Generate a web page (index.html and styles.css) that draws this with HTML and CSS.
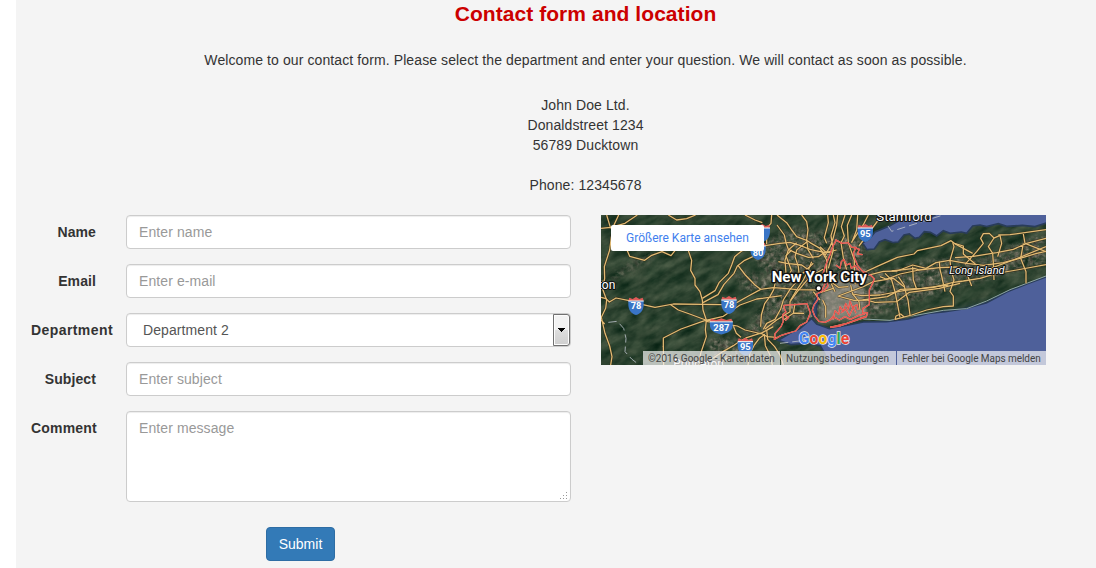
FILE: index.html
```
<!DOCTYPE html>
<html lang="en">
<head>
<meta charset="utf-8">
<title>Contact form and location</title>
<link rel="stylesheet" href="styles.css">
</head>
<body>
<main class="page">
  <header class="intro">
    <h1>Contact form and location</h1>
    <p>Welcome to our contact form. Please select the department and enter your question. We will contact as soon as possible.</p>
    <address>John Doe Ltd.<br>Donaldstreet 1234<br>56789 Ducktown</address>
    <p class="phone">Phone: 12345678</p>
  </header>
  <div class="columns">
    <form class="form">
      <div class="row"><label for="name">Name</label><input class="control" id="name" placeholder="Enter name"></div>
      <div class="row"><label for="email">Email</label><input class="control" id="email" placeholder="Enter e-mail"></div>
      <div class="row"><label for="department">Department</label>
        <div class="control select" id="department"><span>Department 2</span>
          <i class="drop"><svg width="7" height="4" shape-rendering="crispEdges"><path d="M0 0h7v1H0zM1 1h5v1H1zM2 2h3v1H2zM3 3h1v1H3z"/></svg></i>
        </div>
      </div>
      <div class="row"><label for="subject">Subject</label><input class="control" id="subject" placeholder="Enter subject"></div>
      <div class="row"><label for="comment">Comment</label>
        <div class="message"><textarea class="control" id="comment" placeholder="Enter message"></textarea>
          <svg class="grip" width="8" height="8" fill="#999" shape-rendering="crispEdges"><path d="M6 0h1v1H6zM3 3h1v1H3zM6 3h1v1H6zM0 6h1v1H0zM3 6h1v1H3zM6 6h1v1H6z"/></svg>
        </div>
      </div>
      <button class="submit" type="button">Submit</button>
    </form>
    <section class="map">
      <svg class="terrain" viewBox="3 15 1335 450" width="445" height="150">
        <defs>
          <filter id="relief" x="0" y="0" width="100%" height="100%" color-interpolation-filters="sRGB">
            <feTurbulence type="fractalNoise" baseFrequency=".018 .04" numOctaves="5" seed="8"/>
            <feColorMatrix values=".3 .12 0 0 -.03  .24 .12 0 0 .085  .22 .1 0 0 .03  0 0 0 0 1"/>
          </filter>
          <filter id="city" x="-10%" y="-10%" width="120%" height="120%" color-interpolation-filters="sRGB">
            <feTurbulence type="fractalNoise" baseFrequency=".07" numOctaves="3" seed="3" result="n"/>
            <feColorMatrix in="n" values=".6 0 0 0 .1  .55 0 0 0 .12  .5 0 0 0 .09  0 2.6 0 0 -.8" result="c"/>
            <feGaussianBlur in="SourceAlpha" stdDeviation="9" result="b"/>
            <feComposite in="c" in2="b" operator="in"/>
          </filter>
          <filter id="soft"><feGaussianBlur stdDeviation="7"/></filter>
          <g id="roads">
            <path d="M3 262L18 266 28 276 48 264 84 271 125 283 165 292 220 282 310 283 365 284 410 278 440 261 482 238 520 233 552 235 592 239 660 240"/>
            <path d="M56 15L42 45 34 82 29 120 13 170 14 205 8 238 20 270 17 295 4 322 15 370 29 408 36 440 32 465M3 55L32 52 75 40 112 15M20 15L32 55M3 213L21 216M3 330L14 342"/>
            <path d="M82 122L89 139 134 151 155 136 186 125 213 137 225 122M265 122L275 151 272 181 285 205 285 225 300 245 307 270 309 300 319 330 316 359 319 380 302 430 296 465"/>
            <path d="M307 265L345 242 357 218 385 190 395 165 404 140 425 123 462 112 500 106 540 100 570 97 600 106 630 118 675 128 710 120M309 278L354 254 372 223 402 190 412 168 434 151 480 130"/>
            <path d="M414 166L436 195 465 225 482 238M210 283L235 300 269 312 317 330 345 333M190 410L190 384 243 357 314 332 370 319 420 285 470 267 545 257M205 15L230 30 260 26 287 15M435 15L465 30 487 38M488 47L500 70 500 102M515 15L513 40 497 58"/>
            <path d="M190 408L191 465M317 334L400 346 412 348 435 360 487 372 502 380 530 382M400 348L409 370 423 382M314 461L370 424 400 407 416 396 440 383 487 368 520 350"/>
            <path d="M394 435L380 445 368 455M490 358L500 340 525 328 542 297 550 270 570 238 590 215 610 188 640 160M482 350L484 315 494 281 510 259 521 239 530 200"/>
            <path d="M494 358L530 330 570 305 570 275 592 245 630 200 670 177M500 360L503 388 524 410 540 435 550 465M493 372L496 407 510 435 517 465M493 374L478 385 463 405 450 430 444 465"/>
            <path d="M531 15L560 38 575 60 590 80 620 91 640 104M605 15L620 35 624 60 620 90 624 119 640 145M590 98L565 120 555 151 558 190 580 210M620 96L590 120 585 140 595 170 600 220M630 98L660 115 680 150 680 190 705 245"/>
            <path d="M531 45L553 75 558 98 565 118 590 130 625 142 655 140 677 125M535 155L560 160 605 165 640 190 670 205M575 120L558 137 574 181 565 205M635 155L625 180 610 210 590 240 572 270M580 309L612 310M550 330L580 310 585 280M565 200L590 190 610 190"/>
            <path d="M673 140L690 110 698 90 710 45 713 15M683 15L685 38 673 83 680 100M700 15L705 38 693 77 700 120 685 175M735 15L724 50 733 78 723 98 730 143 740 180M755 15L742 46 745 98 763 151 763 180 768 224M773 15L770 60 755 98M777 108L835 30 855 15M754 98L790 44 805 15M660 110L676 125 694 128M663 120L681 142"/>
            <path d="M782 192L830 170 892 142 942 132 952 122 1023 107 1053 92 1063 100 1075 107 1118 130M800 197L850 184 891 183 938 165 978 175 1008 158 1048 151 1100 160 1150 166 1210 158 1270 142 1310 130 1338 124"/>
            <path d="M820 215L860 208 900 192 957 180 1018 173 1070 171 1130 181 1180 172 1240 150 1338 110M758 252L785 257 840 255 915 241 1000 232 1060 217 1090 213 1140 205 1190 190 1250 180 1338 164M713 258L762 271 800 270 825 277 890 275 928 247 1018 235 1080 220"/>
            <path d="M788 270L862 260 902 238 965 235 1045 225M1058 97L1062 110 1050 151 1053 180 1062 210 1050 244 1060 258 1060 288 1030 290 980 300 935 315 885 328 888 318 902 312 912 320"/>
            <path d="M855 190L875 210 885 245 892 280 900 322M895 200L912 225 920 258 924 270 930 315M938 170L940 210 950 238M1018 155L1020 178 1025 198 1035 245M1063 100L1090 108 1090 132 1126 162"/>
            <path d="M1095 163L1130 125 1150 100 1142 85 1150 71 1168 70 1182 84 1165 110 1178 130 1180 158 1182 210M1180 85L1200 76 1205 100 1193 140M1195 75L1230 74 1338 59M1065 143L1120 139 1190 128 1240 118 1280 100 1338 85M1270 100L1262 145 1278 185 1278 220M1270 72L1275 100 1338 125M1100 190L1115 228M840 200L858 207 880 205 912 230M875 183L943 175 958 180M820 215L790 230 715 258M752 225L758 252 777 275 780 300"/>
            <path d="M668 270L677 290 677 323M686 210L715 232 745 230M700 235L660 248M720 190L750 205 765 220M660 270L640 245"/>
          </g>
          <g id="shield">
            <path d="M-23 -15H23V-6C23 12 15 23 0 27C-15 23 -23 12 -23 -6Z" fill="#3975c6"/>
            <path d="M-23 -16L-20 -25-10 -21 0 -27 10 -21 20 -25 23 -16Z" fill="#df5b58"/><path d="M-23 -15H23" stroke="#fff" stroke-width="3"/>
          </g>
        </defs>
        <rect x="3" y="15" width="1335" height="450" fill="#2c4030"/>
        <g transform="rotate(-28 600 250)"><rect x="-200" y="-300" width="1700" height="1150" filter="url(#relief)"/></g>
        <g filter="url(#city)">
          <path d="M450 120L580 50 670 70 790 80 800 165 850 190 1000 150 1150 145 1338 65V160L1040 240 940 280 805 325 620 335 545 320 490 390 430 370 525 235Z"/>
          <path d="M30 200L150 125 155 145 30 215ZM400 180L500 200 510 250 430 240ZM330 380L430 390 480 450 330 450Z"/>
        </g>
        <path d="M668 230L785 190 800 320 660 335Z" fill="#a39c92" opacity=".65" filter="url(#soft)"/>
        <path d="M660 450C760 360 1000 335 1338 238" fill="none" stroke="#17343e" stroke-width="30" opacity=".4" filter="url(#soft)"/>
        <g class="water">
          <path d="M1005 15L985 25 940 27 900 30 868 48 825 66 807 88 787 98 801 119 823 117 838 96 855 89 880 98 895 96 912 75 928 72 945 85 958 82 973 65 991 67 1010 78 1030 62 1050 70 1084 66 1100 70 1118 48 1140 45 1160 50 1195 41 1220 49 1267 46 1305 50 1345 37V8H1005Z"/>
          <path d="M1345 198L1280 222 1220 246 1160 278 1098 295 1035 305 985 310 925 327 860 335 790 336 730 348 688 356 650 342 635 325 618 340 600 356 570 370 535 391 574 404 625 400 661 408 674 430 688 472H1345Z"/>
          <path class="bay" d="M660 250L648 266 640 282 637 314 648 326 650 290Z"/>
        </g>
        <path d="M790 327L870 331 930 319 1030 301 1100 296 1160 273 1230 239 1338 198" fill="none" stroke="#8fa6a2" stroke-width="3"/>
        <use href="#roads" class="road-edge"/><use href="#roads" class="road"/>
        <g class="border">
          <path d="M552 286L584 284 621 281 631 309 620 336 600 347 587 363 560 371 542 377 523 388 525 371 543 350 550 334 548 314 558 306 552 294Z"/>
          <path d="M708 92L698 110 690 135 680 158 672 182 666 202 675 222 664 245 650 252 654 268 642 285 637 300 645 320 657 334 675 337 692 328 700 318M690 352L740 340 800 318 802 308 788 309 788 296 808 284 808 240 818 220 823 206 812 196 788 184 773 167 765 148 760 130 768 112 756 112 744 98 726 100 706 89"/>
          <path d="M760 112L778 118 772 132 788 134M708 165L720 175 724 155 731 148 740 165 750 160 754 175 765 167 777 183M690 352L720 348 800 320M699 329L705 302 716 313 720 290 730 305 737 280 745 298 750 273 757 292 771 284 774 300M700 320L718 330 735 320 751 328 776 316 795 312M723 308L738 298 748 318 760 291 768 310M680 215L684 228 670 245M555 316L566 322 556 332"/>
        </g>
        <g class="boundary"><path d="M25 337L52 334 71 355 78 385 75 425 95 447 118 465M864 48L875 64 1045 10M540 400L640 388 700 373"/></g>
        <g class="badges">
          <g transform="translate(487 69)"><use href="#shield"/></g>
          <g transform="translate(474 123)"><use href="#shield"/><text y="15">80</text></g>
          <g transform="translate(108 288)"><use href="#shield"/><text y="10">78</text></g>
          <g transform="translate(387 285)"><use href="#shield"/><text y="10">78</text></g>
          <g transform="translate(364 349)"><use href="#shield" transform="scale(1.5 .9)"/><text y="14">287</text></g>
          <g transform="translate(436 410)"><use href="#shield"/><text y="11">95</text></g>
          <g transform="translate(796 69)"><use href="#shield"/><text y="12">95</text></g>
        </g>
        <circle cx="656" cy="235" r="8" fill="#fff" stroke="#111" stroke-width="4"/>
        <g class="places">
          <text x="515" y="215" class="city" textLength="286" lengthAdjust="spacingAndGlyphs">New York City</text>
          <text x="829" y="34" textLength="166" lengthAdjust="spacingAndGlyphs">Stamford</text><text x="-6" y="238">ton</text>
          <text x="1048" y="192" class="island" textLength="166" lengthAdjust="spacingAndGlyphs">Long Island</text><text x="220" y="474" textLength="151" lengthAdjust="spacingAndGlyphs">Princeton</text>
        </g>
        <text class="brand" x="596" y="402" textLength="152"><tspan fill="#4285f4">G</tspan><tspan fill="#ea4335">o</tspan><tspan fill="#fbbc05">o</tspan><tspan fill="#4285f4">g</tspan><tspan fill="#34a853">l</tspan><tspan fill="#ea4335">e</tspan></text>
      </svg>
      <a class="larger">Größere Karte ansehen</a>
      <footer class="credits"><span>©2016 Google - Kartendaten</span><span>Nutzungsbedingungen</span><span>Fehler bei Google Maps melden</span></footer>
    </section>
  </div>
</main>
</body>
</html>
```
FILE: styles.css
```
* { box-sizing: border-box; }
body { margin: 0; background: #fff; color: #333; font: 14px/20px "Liberation Sans", Arial, sans-serif; }
.page { margin-left: 16px; height: 568px; background: #f4f4f4; }
.intro { padding: 1px 0 0 59px; text-align: center; letter-spacing: .1px; white-space: nowrap; }
.intro h1 { margin: 0 0 24px; color: #c00; font-size: 21px; line-height: 25px; font-weight: bold; letter-spacing: .06px; }
.intro p { margin: 0; }
.intro address { margin: 25px 0 20px; font-style: normal; }
.columns { display: flex; gap: 30px; padding: 20px 0 0 15px; }
.form { width: 540px; }
.row { display: flex; gap: 30px; margin-bottom: 15px; }
.row label { width: 65px; flex: none; padding-top: 7px; font-weight: bold; display: flex; justify-content: flex-end; letter-spacing: .1px; }
.row label[for="department"], .row label[for="comment"] { justify-content: flex-start; letter-spacing: .2px; }
.row label[for="department"] { letter-spacing: .42px; }
.control { display: block; width: 445px; height: 34px; padding: 6px 12px; border: 1px solid #ccc; border-radius: 4px; background: #fff; box-shadow: inset 0 1px 1px rgba(0,0,0,.075); color: #555; font: inherit; letter-spacing: .09px; outline: 0; }
.control::placeholder { color: #999; opacity: 1; }
.select { display: flex; justify-content: space-between; padding: 0 0 0 16px; line-height: 32px; }
.drop { width: 17px; height: 32px; display: grid; place-items: center; border: 1px solid #707070; border-radius: 0 3px 3px 0; background: linear-gradient(#f2f2f2 0 48%, #ddd 52%, #cfcfcf); box-shadow: inset 0 0 0 1px #fcfcfc; }
.message { position: relative; }
.message textarea { height: 91px; resize: none; }
.grip { position: absolute; right: 3px; bottom: 2px; }
.submit { display: block; width: 69px; height: 34px; margin: 25px 0 0 235px; padding: 0; border: 1px solid #2e6da4; border-radius: 4px; background: #337ab7; color: #fff; font: inherit; }
.map { position: relative; width: 445px; height: 150px; overflow: hidden; font-family: Roboto, sans-serif; }
.terrain { display: block; }
.water { fill: #4e609a; stroke: #293c59; stroke-width: 5; }
.water .bay { fill: #37496e; }
.road-edge, .road, .border, .boundary { fill: none; stroke-linejoin: round; }
.road-edge { stroke: #33230f; stroke-opacity: .65; stroke-width: 7; }
.road { stroke: #e2bb74; stroke-width: 3.8; }
.border { stroke: #e9544b; stroke-width: 3.8; filter: drop-shadow(0 0 2px #e5b4aa); }
.boundary { stroke: #bac1c8; stroke-width: 2.5; stroke-dasharray: 25 12; }
.badges text { fill: #fff; font: bold 28px Roboto, sans-serif; text-anchor: middle; }
.places text { fill: #fff; stroke: #111; stroke-width: 6; stroke-linejoin: round; paint-order: stroke; font: 36px Roboto, sans-serif; }
.places .city { font-weight: bold; font-size: 45px; stroke-width: 9; }
.places .island { font-style: italic; font-size: 35px; }
.brand { font: bold 47px Roboto, sans-serif; stroke: #e4e8ee; stroke-width: 4; paint-order: stroke; }
.larger { position: absolute; left: 10px; top: 10px; width: 153px; height: 26px; border-radius: 2px; background: #fff; color: #427fed; font-size: 12px; line-height: 26px; text-align: center; white-space: nowrap; }
.credits { position: absolute; right: 0; bottom: 0; display: flex; height: 14px; color: #444; font-size: 10px; line-height: 15px; white-space: nowrap; }
.credits span { padding-left: 5px; background: rgba(245,245,245,.7); }
.credits span + span { margin-left: 1px; }
.credits span:nth-child(1) { width: 137px; }
.credits span:nth-child(2) { width: 115px; letter-spacing: .15px; }
.credits span:nth-child(3) { width: 149px; letter-spacing: -.05px; }
```
